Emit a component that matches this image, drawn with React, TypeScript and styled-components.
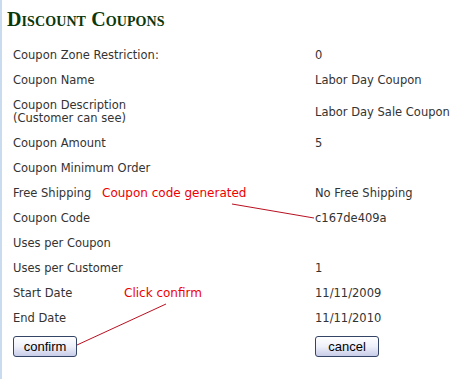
import React from "react";
import styled, { createGlobalStyle } from "styled-components";

const GlobalStyle = createGlobalStyle`
  html, body {
    margin: 0;
    padding: 0;
    background: #ffffff;
  }
`;

const Page = styled.div`
  position: relative;
  width: 467px;
  height: 379px;
  box-sizing: border-box;
  border-left: 2px solid #c9dbef;
  background: #ffffff;
  font-family: "DejaVu Sans", Verdana, sans-serif;
  font-size: 11.5px;
  color: #333333;
  overflow: hidden;
`;

const Title = styled.h1`
  margin: 0;
  padding: 9px 0 0 5px;
  height: 34px;
  box-sizing: border-box;
  font-family: "Liberation Serif", "Times New Roman", serif;
  font-variant: small-caps;
  font-weight: bold;
  font-size: 20px;
  line-height: 20px;
  color: #0a370a;
  letter-spacing: 0.1px;
`;

const Table = styled.div`
  display: grid;
  grid-template-columns: 302px 1fr;
  padding: 9px 0 0 11px;
`;

const Cell = styled.div<{ $tall?: boolean }>`
  display: flex;
  align-items: center;
  height: ${(p) => (p.$tall ? "38px" : "25px")};
  line-height: 13px;
`;

const ButtonCell = styled.div`
  padding-top: 5px;
`;

const Button = styled.button`
  width: 64px;
  height: 21px;
  padding: 0;
  border: 1px solid #334466;
  border-radius: 3px;
  background: linear-gradient(#ffffff 0%, #eef0fa 50%, #c7cce8 100%);
  font-family: "Liberation Sans", Arial, sans-serif;
  font-size: 13px;
  color: #000000;
`;

const Note = styled.span<{ $x: number; $y: number }>`
  position: absolute;
  left: ${(p) => p.$x}px;
  top: ${(p) => p.$y}px;
  font-family: "DejaVu Sans", Verdana, sans-serif;
  font-size: 12px;
  color: #ee0000;
  white-space: nowrap;
`;

const Overlay = styled.svg`
  position: absolute;
  left: -2px;
  top: 0;
  pointer-events: none;
`;

const rows: { label: React.ReactNode; value: string; tall?: boolean }[] = [
  { label: "Coupon Zone Restriction:", value: "0" },
  { label: "Coupon Name", value: "Labor Day Coupon" },
  {
    label: (
      <span>
        Coupon Description
        <br />
        (Customer can see)
      </span>
    ),
    value: "Labor Day Sale Coupon",
    tall: true,
  },
  { label: "Coupon Amount", value: "5" },
  { label: "Coupon Minimum Order", value: "" },
  { label: "Free Shipping", value: "No Free Shipping" },
  { label: "Coupon Code", value: "c167de409a" },
  { label: "Uses per Coupon", value: "" },
  { label: "Uses per Customer", value: "1" },
  { label: "Start Date", value: "11/11/2009" },
  { label: "End Date", value: "11/11/2010" },
];

export default function App() {
  return (
    <>
      <GlobalStyle />
      <Page>
        <Title>Discount Coupons</Title>
        <Table>
          {rows.map((r, i) => (
            <React.Fragment key={i}>
              <Cell $tall={r.tall}>{r.label}</Cell>
              <Cell $tall={r.tall}>{r.value}</Cell>
            </React.Fragment>
          ))}
          <ButtonCell>
            <Button>confirm</Button>
          </ButtonCell>
          <ButtonCell>
            <Button>cancel</Button>
          </ButtonCell>
        </Table>
        <Note $x={100} $y={186}>Coupon code generated</Note>
        <Note $x={122} $y={286}>Click confirm</Note>
        <Overlay width="467" height="379" viewBox="0 0 467 379">
          <line x1="232" y1="204" x2="314" y2="218" stroke="#b81020" strokeWidth="1" />
          <line x1="77" y1="345" x2="166" y2="304" stroke="#b81020" strokeWidth="1" />
        </Overlay>
      </Page>
    </>
  );
}
